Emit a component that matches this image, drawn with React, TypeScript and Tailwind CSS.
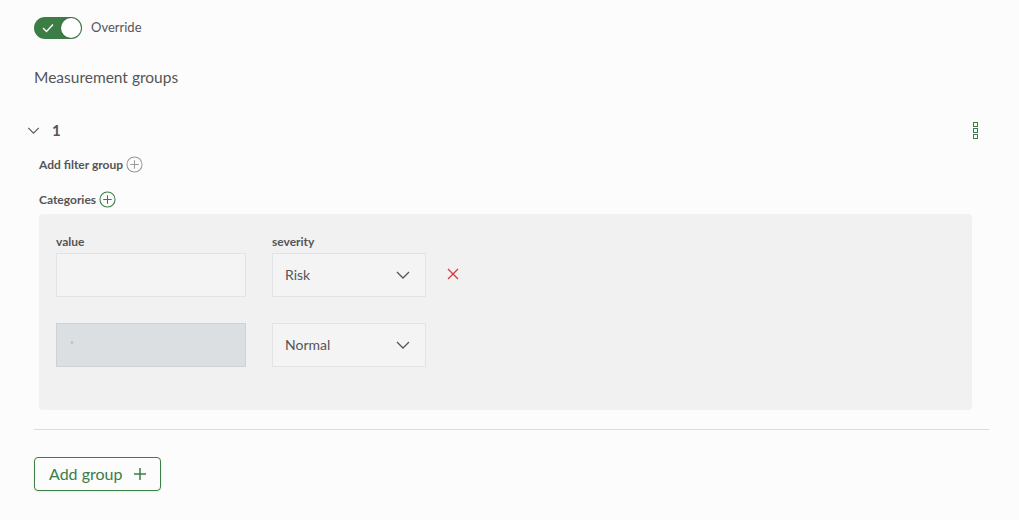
import React from "react";

const font = { fontFamily: "Lato, 'Noto Sans', sans-serif" };

function Chevron({ className = "" }: { className?: string }) {
  return (
    <svg viewBox="0 0 14 8" className={className} fill="none" stroke="currentColor" strokeWidth="1.3">
      <path d="M1 1l6 6 6-6" />
    </svg>
  );
}

function PlusCircle({ className = "" }: { className?: string }) {
  return (
    <svg viewBox="0 0 18 18" className={className} fill="none" stroke="currentColor" strokeWidth="1.1">
      <circle cx="9" cy="9" r="8" />
      <path d="M9 4.5v9M4.5 9h9" />
    </svg>
  );
}

function SelectBox({ value }: { value: string }) {
  return (
    <div className="flex h-[44px] w-[154px] items-center justify-between border border-[#e2e3e5] bg-[#f4f4f5] pl-[12px] pr-[15px] text-[14px] text-[#555]">
      <span>{value}</span>
      <Chevron className="h-[8px] w-[14px] text-[#555]" />
    </div>
  );
}

export default function App() {
  return (
    <div className="min-h-[520px] w-full bg-[#fcfcfd] px-[34px] pt-[17px]" style={font}>
      <div className="flex items-center gap-[9px]">
        <div className="flex h-[22px] w-[48px] items-center justify-between rounded-full bg-[#3b7d45] pl-[8px] pr-[1px]">
          <svg viewBox="0 0 12 10" className="h-[10px] w-[12px]" fill="none" stroke="white" strokeWidth="1.4">
            <path d="M1 5l3.5 3.5L11 1.5" />
          </svg>
          <div className="h-[20px] w-[20px] rounded-full bg-white shadow-[0_0_2px_rgba(0,0,0,0.3)]" />
        </div>
        <span className="text-[13px] text-[#555]">Override</span>
      </div>

      <h2 className="mt-[27px] text-[15.5px] text-[#555]">Measurement groups</h2>

      <div className="mt-[30px] flex items-center justify-between">
        <div className="-ml-[7px] flex items-center gap-[12px]">
          <Chevron className="h-[7px] w-[13px] text-[#555]" />
          <span className="text-[15px] font-bold text-[#555]">1</span>
        </div>
        <div className="mr-[7px] flex flex-col gap-[1px]">
          <span className="h-[5px] w-[5px] border border-[#3b7d45]" />
          <span className="h-[5px] w-[5px] border border-[#3b7d45]" />
          <span className="h-[5px] w-[5px] border border-[#3b7d45]" />
        </div>
      </div>

      <div className="ml-[5px]">
        <div className="mt-[14px] flex items-center gap-[3px]">
          <span className="text-[12px] font-bold text-[#555]">Add filter group</span>
          <PlusCircle className="h-[17px] w-[17px] text-[#999]" />
        </div>
        <div className="mt-[17px] flex items-center gap-[3px]">
          <span className="text-[12px] font-bold text-[#555]">Categories</span>
          <PlusCircle className="h-[17px] w-[17px] text-[#3b7d45]" />
        </div>

        <div className="mr-[13px] mt-[5px] h-[196px] rounded-[4px] bg-[#f1f1f2] px-[17px] pt-[19px]">
          <div className="flex gap-[26px] text-[12px] font-bold text-[#555]">
            <span className="w-[190px]">value</span>
            <span>severity</span>
          </div>
          <div className="mt-[2px] flex items-center gap-[26px]">
            <div className="h-[44px] w-[190px] border border-[#e2e3e5] bg-[#f4f4f5]" />
            <SelectBox value="Risk" />
            <svg viewBox="0 0 12 12" className="-mt-[2px] ml-[-5px] h-[12px] w-[12px]" fill="none" stroke="#d9383a" strokeWidth="1.3">
              <path d="M1 1l10 10M11 1L1 11" />
            </svg>
          </div>
          <div className="mt-[26px] flex items-center gap-[26px]">
            <div className="flex h-[44px] w-[190px] items-center border border-[#cfd2d5] bg-[#dcdfe1] pl-[13px] text-[9px] text-[#aaa]">
              *
            </div>
            <SelectBox value="Normal" />
          </div>
        </div>
      </div>

      <div className="mt-[19px] h-px w-[955px] bg-[#dcdcdf]" />

      <button className="mt-[27px] flex h-[34px] items-center gap-[12px] rounded-[4px] border border-[#3b7d45] px-[14px] text-[16px] text-[#3b7d45] shadow-[0_1px_2px_rgba(0,0,0,0.08)]">
        <span>Add group</span>
        <svg viewBox="0 0 12 12" className="h-[12px] w-[12px]" fill="none" stroke="currentColor" strokeWidth="1.5">
          <path d="M6 0v12M0 6h12" />
        </svg>
      </button>
    </div>
  );
}
